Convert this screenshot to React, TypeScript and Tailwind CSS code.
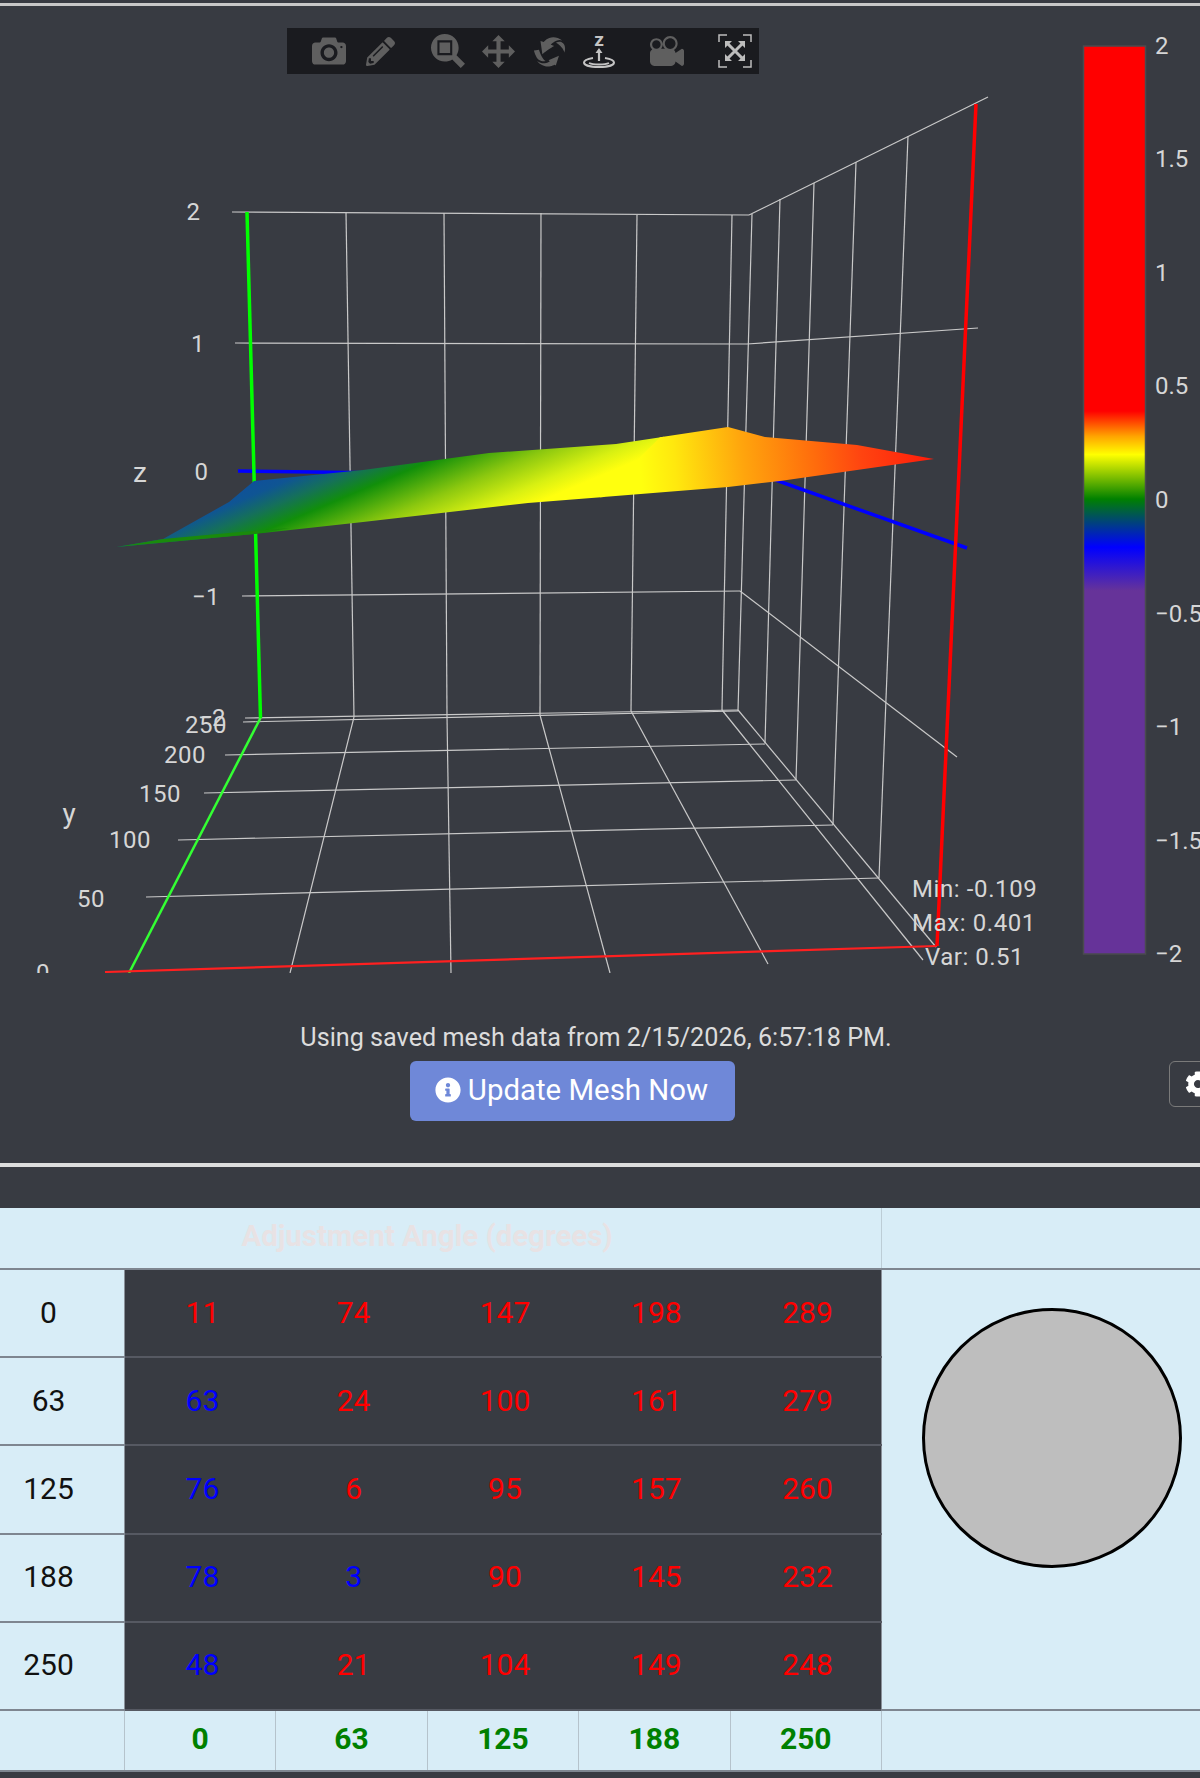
import { FaCog, FaInfoCircle, FaPencilAlt } from 'react-icons/fa';

type Seg = [number, number, number, number];

// grid of the 3d plot, in page pixels
const GRID: Seg[] = [
  // back wall
  [232, 212, 749, 215], [749, 215, 988, 97],
  [235, 343, 747, 344], [747, 344, 978, 328],
  [242, 596, 740, 591], [740, 591, 957, 757],
  [245, 718, 738, 710], [738, 710, 936, 947],
  [346, 212, 354, 717], [444, 213, 447, 716], [541, 213, 540, 715],
  [637, 215, 631, 711], [732, 215, 722, 710], [752, 214, 738, 711],
  // side wall
  [780, 199, 765, 743], [814, 183, 796, 780], [856, 162, 833, 825], [908, 136, 879, 878],
  // floor
  [243, 722, 738, 711], [225, 755, 765, 744], [204, 793, 796, 780], [178, 840, 833, 825], [146, 897, 879, 878],
  [354, 717, 290, 973], [447, 716, 451, 973], [540, 715, 610, 973], [631, 711, 768, 964], [722, 710, 923, 960],
];

const AXIS_LABELS: { x: number; y: number; t: string }[] = [
  { x: 193.5, y: 212, t: '2' }, { x: 198, y: 343.5, t: '1' }, { x: 201.5, y: 472, t: '0' }, { x: 206, y: 597, t: '−1' },
  { x: 212, y: 718, t: '−2' }, { x: 206, y: 725, t: '250' }, { x: 185, y: 755, t: '200' }, { x: 160, y: 794, t: '150' },
  { x: 130, y: 840, t: '100' }, { x: 91, y: 899, t: '50' }, { x: 43, y: 973, t: '0' },
];

const BAR_LABELS: [number, string][] = [
  [46, '2'], [159, '1.5'], [273, '1'], [386, '0.5'], [500, '0'], [614, '−0.5'], [727, '−1'], [841, '−1.5'], [954, '−2'],
];

const ROWS: { y: number; cells: [number, boolean][] }[] = [
  { y: 0, cells: [[11, false], [74, false], [147, false], [198, false], [289, false]] },
  { y: 63, cells: [[63, true], [24, false], [100, false], [161, false], [279, false]] },
  { y: 125, cells: [[76, true], [6, false], [95, false], [157, false], [260, false]] },
  { y: 188, cells: [[78, true], [3, true], [90, false], [145, false], [232, false]] },
  { y: 250, cells: [[48, true], [21, false], [104, false], [149, false], [248, false]] },
];

function ModeIcon({ d, className }: { d: string; className: string }) {
  return (
    <svg viewBox="0 0 1000 1000" className={className}>
      <path d={d} transform="matrix(1 0 0 -1 0 850)" fill="currentColor" />
    </svg>
  );
}

function Toolbar() {
  return (
    <div className="absolute left-[287px] top-[22px] flex h-[46px] w-[472px] items-center bg-[#1a1b1f] text-[#5f5f5f]">
      <ModeIcon
        className="ml-[25px] h-[34px] w-[34px] shrink-0"
        d="M500 450c-83 0-150-67-150-150 0-83 67-150 150-150 83 0 150 67 150 150 0 83-67 150-150 150z m400 150h-120c-16 0-34 13-39 29l-31 93c-6 15-23 28-40 28h-340c-16 0-34-13-39-28l-31-94c-6-15-23-28-40-28h-120c-55 0-100-45-100-100v-450c0-55 45-100 100-100h800c55 0 100 45 100 100v450c0 55-45 100-100 100z m-400-550c-138 0-250 112-250 250 0 138 112 250 250 250 138 0 250-112 250-250 0-138-112-250-250-250z m365 380c-19 0-35 16-35 35 0 19 16 35 35 35 19 0 35-16 35-35 0-19-16-35-35-35z"
      />
      <FaPencilAlt className="ml-[20px] h-[29px] w-[29px] shrink-0" />
      <ModeIcon
        className="ml-[36px] h-[34px] w-[34px] shrink-0"
        d="m1000-25l-250 251c40 63 63 138 63 218 0 224-182 406-407 406-224 0-406-182-406-406s183-406 407-406c80 0 155 22 218 62l250-250 125 125z m-812 250l0 438 437 0 0-438-437 0z m62 375l313 0 0-312-313 0 0 312z"
      />
      <ModeIcon
        className="ml-[17px] h-[33px] w-[33px] shrink-0"
        d="m1000 350l-187 188 0-125-250 0 0 250 125 0-188 187-187-187 125 0 0-250-250 0 0 125-188-188 186-187 0 125 252 0 0-250-125 0 187-188 188 188-125 0 0 250 250 0 0-126 187 188z"
      />
      <ModeIcon
        className="ml-[18px] h-[33px] w-[33px] shrink-0"
        d="M922 660c-5 4-9 7-14 11-359 263-580-31-580-31l-102 28 58-400c0 1 1 1 2 2 118 108 351 249 351 249s-62 27-100 42c88 83 222 183 347 122 16-8 30-17 44-27-2 1-4 2-6 4z m36-329c0 0 64 229-88 296-62 27-124 14-175-11 157-78 225-208 249-266 8-19 11-31 11-31 2-5 6-15 11-32-5 13-8 20-8 20z m-775-239c70-31 117-50 198-32-121 80-199 346-199 346l-96-15-58-12c0 0 55-226 155-287z m603 133l-317-139c0 0 4-4 19-14 7-5 24-15 24-15s-177-147-389 4c235-287 536-112 536-112l31-22 100 299-4-1z"
      />
      <svg viewBox="0 0 32 34" className="ml-[17px] h-[34px] w-[32px] shrink-0 text-[#c4c4c4]">
        <text x="16" y="12" textAnchor="middle" fontSize="19" fontWeight="700" fill="currentColor" fontFamily="Roboto, sans-serif">z</text>
        <path d="M16 14l-3.500 5h2.400v8h2.200v-8h2.400z" fill="currentColor" />
        <path d="M10 24c-5 .8-9 2.500-9 4.500 0 2.700 6.500 4.500 15 4.500s15-1.800 15-4.500c0-2-4-3.700-9-4.500" fill="none" stroke="currentColor" strokeWidth="2" />
        <path d="M6 29c2 1 6 1.500 10 1.500s8-.5 10-1.500" fill="none" stroke="currentColor" strokeWidth="1.800" />
      </svg>
      <ModeIcon
        className="ml-[35px] h-[34px] w-[34px] shrink-0"
        d="m938 413l-188-125c0 37-17 71-44 94 64 38 107 107 107 187 0 121-98 219-219 219-121 0-219-98-219-219 0-61 25-117 66-156h-115c30 33 49 76 49 125 0 103-84 187-187 187s-188-84-188-187c0-57 26-107 65-141-38-22-65-62-65-109v-250c0-70 56-126 125-126h500c69 0 125 56 125 126l188-126c34 0 62 28 62 63v375c0 35-28 63-62 63z m-750 0c-69 0-125 56-125 125s56 125 125 125 125-56 125-125-56-125-125-125z m406-1c-87 0-157 70-157 157 0 86 70 156 157 156s156-70 156-156-70-157-156-157z"
      />
      <svg viewBox="0 0 34 34" className="ml-[34px] h-[34px] w-[34px] shrink-0 text-[#bdbdbd]">
        <path d="M1 8V1h8M25 1h8v7M33 26v7h-8M9 33H1v-7" fill="none" stroke="currentColor" strokeWidth="1.500" />
        <path d="M10 10l14 14M24 10L10 24" stroke="currentColor" strokeWidth="3" />
        <path d="M7 7h7l-7 7zM27 7v7l-7-7zM27 27h-7l7-7zM7 27v-7l7 7z" fill="currentColor" />
      </svg>
    </div>
  );
}

function Plot() {
  return (
    <svg viewBox="0 6 1200 967" className="block h-[967px] w-[1200px]" fontFamily="Roboto, sans-serif">
      <defs>
        <linearGradient id="surfaceLeft" gradientUnits="userSpaceOnUse" x1="210" y1="497" x2="308" y2="728">
          <stop offset="0%" stopColor="#0f4f9c" />
          <stop offset="6%" stopColor="#0f5593" />
          <stop offset="13%" stopColor="#15705a" />
          <stop offset="21%" stopColor="#118f0a" />
          <stop offset="35%" stopColor="#8cc80f" />
          <stop offset="46%" stopColor="#d8f012" />
          <stop offset="53%" stopColor="#ffff0e" />
        </linearGradient>
        <linearGradient id="surfaceRight" gradientUnits="userSpaceOnUse" x1="640" y1="470" x2="934" y2="440">
          <stop offset="0%" stopColor="#ffff0e" />
          <stop offset="12%" stopColor="#ffe80e" />
          <stop offset="35%" stopColor="#ffa50d" />
          <stop offset="60%" stopColor="#ff6a0c" />
          <stop offset="75%" stopColor="#ff4410" />
          <stop offset="100%" stopColor="#ff1a0a" />
        </linearGradient>
        <linearGradient id="bar" x1="0" y1="0" x2="0" y2="1">
          <stop offset="40.2%" stopColor="#ff0000" />
          <stop offset="43%" stopColor="#ffa500" />
          <stop offset="45%" stopColor="#ffff00" />
          <stop offset="49.900%" stopColor="#008000" />
          <stop offset="55.200%" stopColor="#0000ff" />
          <stop offset="60%" stopColor="#663399" />
        </linearGradient>
      </defs>

      {GRID.map(([x1, y1, x2, y2], i) => (
        <line key={i} x1={x1} y1={y1} x2={x2} y2={y2} stroke="#c9c9c9" strokeWidth="1.200" />
      ))}

      <polyline points="238,471 770,478 967,548" fill="none" stroke="#0000ff" strokeWidth="3.500" />
      <line x1="247" y1="212" x2="260.500" y2="718" stroke="#00ff00" strokeWidth="3.500" />
      <line x1="260.500" y1="718" x2="129" y2="973" stroke="#33ff33" strokeWidth="2.500" />
      <line x1="105" y1="972" x2="937" y2="946" stroke="#ff2020" strokeWidth="2.200" />
      <line x1="937" y1="946" x2="976" y2="104" stroke="#ff0000" strokeWidth="3.500" />

      <polygon
        points="116.500,547 163,539 229,502 254,481 363,470 489,453 616,444 664,436.700 604,497 528,503 363,522 254,534"
        fill="url(#surfaceLeft)"
      />
      <polygon
        points="660,437.300 728,427 765,437 857,445 934,459 780,481 728,487 600,497.200"
        fill="url(#surfaceRight)"
      />
      <polygon points="116.500,547 163,539 240,532 290,528 254,534" fill="#1a8a0c" />

      <g fill="#d6d6d6" fontSize="24">
        {AXIS_LABELS.map((l) => (
          <text key={l.t + l.y} x={l.x} y={l.y} textAnchor="middle" dominantBaseline="central" letterSpacing="0.500">{l.t}</text>
        ))}
        <text x="140" y="472" fontSize="28" textAnchor="middle" dominantBaseline="central">z</text>
        <text x="69" y="813" fontSize="28" textAnchor="middle" dominantBaseline="central">y</text>
        <text x="912" y="889" dominantBaseline="central" letterSpacing="0.600">Min: -0.109</text>
        <text x="912" y="923" dominantBaseline="central" letterSpacing="0.600">Max: 0.401</text>
        <text x="925" y="957" dominantBaseline="central" letterSpacing="0.500">Var: 0.51</text>
        {BAR_LABELS.map(([y, t]) => (
          <text key={t} x="1155" y={y} dominantBaseline="central">{t}</text>
        ))}
      </g>

      <rect x="1083.500" y="46" width="62" height="908" fill="url(#bar)" stroke="#4a4b4f" strokeWidth="1.500" />
    </svg>
  );
}

function MeshTable() {
  return (
    <table className="-ml-[27px] w-[1227px] table-fixed border-collapse text-[30px]">
      <colgroup>
        <col className="w-[151.500px]" />
        <col className="w-[151.400px]" />
        <col className="w-[151.400px]" />
        <col className="w-[151.400px]" />
        <col className="w-[151.400px]" />
        <col className="w-[151.400px]" />
        <col />
      </colgroup>
      <thead>
        <tr className="h-[61px] bg-[#d8edf7]">
          <th colSpan={6} className="border-b-2 border-[#7e8690] pb-[4px] text-[29.400px] font-bold text-[#e8e2e4]">Adjustment Angle (degrees)</th>
          <th className="border-b-2 border-l border-b-[#7e8690] border-l-[#bccdd6]" />
        </tr>
      </thead>
      <tbody>
        {ROWS.map((row, i) => (
          <tr key={row.y} className="h-[88.200px]">
            <td className="border-b-2 border-r border-b-[#7e8690] border-r-[#8a919a] bg-[#d8edf7] pb-[2px] text-center font-normal text-[#111111]">{row.y}</td>
            {row.cells.map(([v, neg], j) => (
              <td
                key={j}
                className={`border-b-2 border-[#565962] bg-[#383b42] pb-[2px] pl-[4px] text-center ${neg ? 'text-[#0000ff]' : 'text-[#ff0000]'}`}
              >
                {v}
              </td>
            ))}
            {i === 0 && (
              <td rowSpan={5} className="border-b-2 border-l border-b-[#7e8690] border-l-[#8a919a] bg-[#d8edf7] align-top">
                <div className="ml-[40px] mt-[38px] h-[260px] w-[260px] rounded-full border-[3px] border-black bg-[#bebebe]" />
              </td>
            )}
          </tr>
        ))}
      </tbody>
      <tfoot>
        <tr className="h-[61px] bg-[#d8edf7]">
          <td className="border-b-2 border-r border-b-[#7e8690] border-r-[#b5c3cc]" />
          {[0, 63, 125, 188, 250].map((v) => (
            <td key={v} className="border-b-2 border-r border-b-[#7e8690] border-r-[#b5c3cc] pb-[4px] text-center font-bold text-[#008000]">{v}</td>
          ))}
          <td className="border-b-2 border-b-[#7e8690]" />
        </tr>
      </tfoot>
    </table>
  );
}

export default function App() {
  return (
    <div className="h-[1778px] w-[1200px] overflow-hidden bg-[#383b42] font-['Roboto',sans-serif]">
      <div className="pt-[3px]">
        <div className="h-[3px] bg-[#c8c8c8]" />
      </div>
      <div className="relative">
        <Plot />
        <Toolbar />
      </div>

      <p className="mt-[49px] h-[32px] pr-2 text-center text-[25.200px] leading-[32px] text-[#dcdcdc]">
        Using saved mesh data from 2/15/2026, 6:57:18 PM.
      </p>
      <div className="mt-[7px] flex items-start">
        <button className="ml-[410px] flex h-[60px] w-[325px] shrink-0 items-center justify-center gap-[7px] rounded-[6px] bg-[#6f88d8] pb-[2px] pr-[2px] text-[29.400px] text-white">
          <FaInfoCircle className="h-[26px] w-[26px]" />
          Update Mesh Now
        </button>
        <button className="ml-[434px] flex h-[46px] w-[60px] shrink-0 items-center rounded-[6px] border border-[#7a7a7a] pl-[15px] text-white">
          <FaCog className="h-[26px] w-[26px]" />
        </button>
      </div>

      <div className="mt-[42px] h-[4px] bg-[#dddddd]" />
      <div className="mt-[41px]">
        <MeshTable />
      </div>
    </div>
  );
}
